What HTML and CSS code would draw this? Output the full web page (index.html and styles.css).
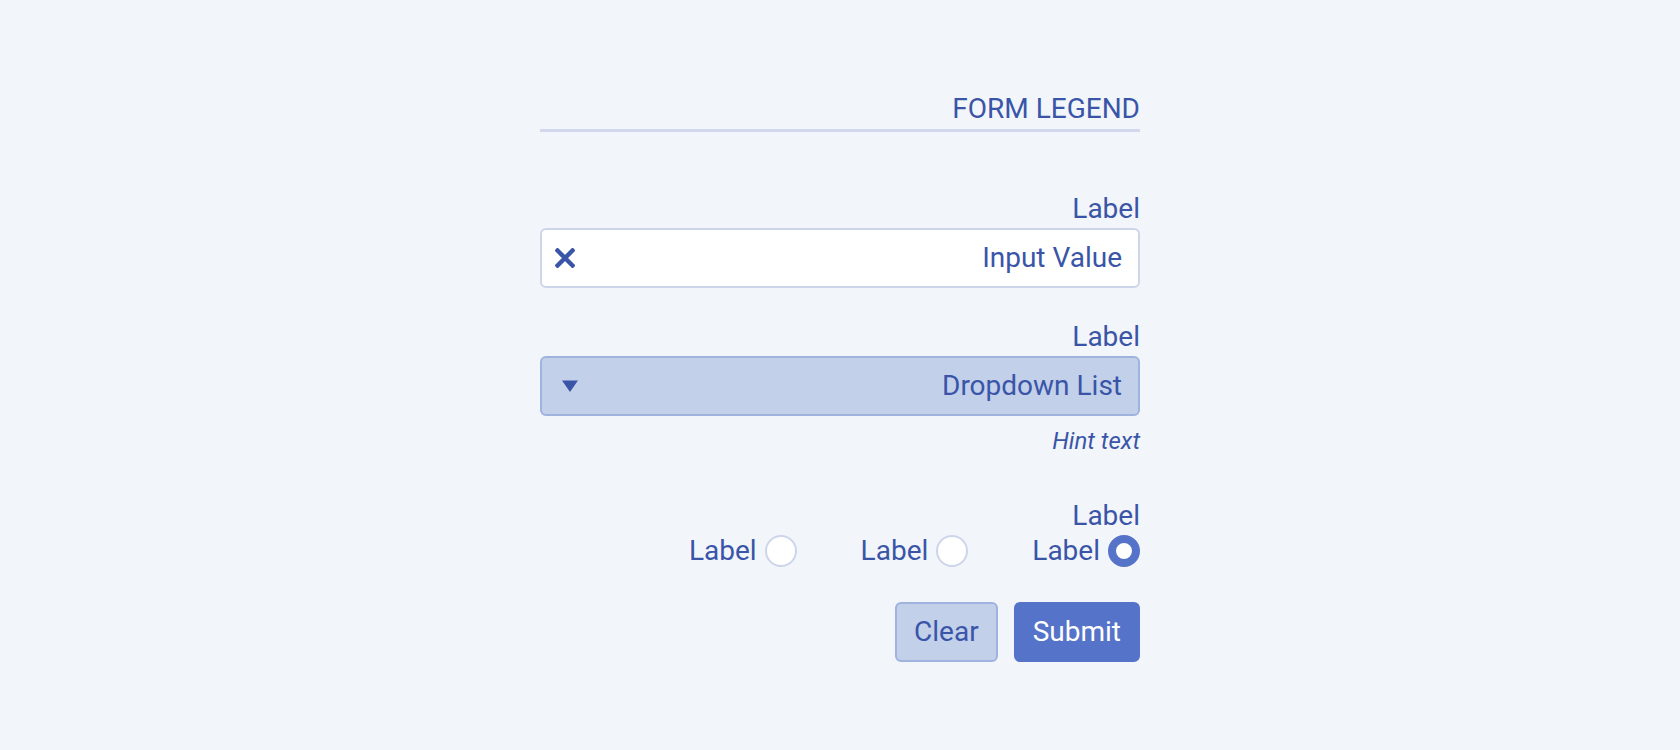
FILE: index.html
```html
<!DOCTYPE html>
<html lang="en">
<head>
<meta charset="utf-8">
<title>Form</title>
<link rel="stylesheet" href="styles.css">
</head>
<body>
<form class="form">
  <div class="legend">FORM LEGEND</div>

  <div class="field field-first">
    <div class="label">Label</div>
    <div class="input">
      <svg class="icon-x" width="20" height="20" viewBox="0 0 20 20"><path d="M2.5 2.5 L17.5 17.5 M17.5 2.5 L2.5 17.5" stroke="currentColor" stroke-width="4.4" stroke-linecap="square" fill="none"/></svg>
      <span class="value">Input Value</span>
    </div>
  </div>

  <div class="field">
    <div class="label">Label</div>
    <div class="input select">
      <svg class="icon-tri" width="16" height="12" viewBox="0 0 16 12"><path d="M0 0.5 L16 0.5 L8 12 Z" fill="currentColor"/></svg>
      <span class="value">Dropdown List</span>
    </div>
    <div class="hint">Hint text</div>
  </div>

  <div class="field field-radio">
    <div class="label">Label</div>
    <div class="radios">
      <div class="radio"><span>Label</span><span class="dot"></span></div>
      <div class="radio"><span>Label</span><span class="dot"></span></div>
      <div class="radio"><span>Label</span><span class="dot checked"></span></div>
    </div>
  </div>

  <div class="buttons">
    <div class="btn btn-clear">Clear</div>
    <div class="btn btn-submit">Submit</div>
  </div>
</form>
</body>
</html>
```

FILE: styles.css
```css
html, body {
  margin: 0;
  padding: 0;
  background: #f2f5fa;
}
body {
  font-family: Roboto, "Liberation Sans", sans-serif;
  font-size: 28px;
  line-height: 1.2;
  color: #3a55a8;
  height: 750px;
}
.form {
  width: 600px;
  margin: 0 auto;
  padding-top: 92px;
  display: flex;
  flex-direction: column;
}
.legend {
  text-align: right;
  padding-bottom: 3px;
  border-bottom: 3px solid #d1d7ec;
}
.field {
  display: flex;
  flex-direction: column;
  margin-top: 32px;
}
.field-first {
  margin-top: 60px;
}
.label {
  text-align: right;
  margin-bottom: 3px;
}
.input {
  display: flex;
  align-items: center;
  justify-content: space-between;
  background: #ffffff;
  border: 2px solid #cdd5ea;
  border-radius: 6px;
  padding: 11px 16px 11px 13px;
}
.select {
  background: #c2d0ea;
  border-color: #9fb3de;
  padding-left: 20px;
}
.icon-x, .icon-tri {
  display: block;
  flex: none;
}
.hint {
  text-align: right;
  font-style: italic;
  font-size: 24px;
  margin-top: 11px;
}
.field-radio {
  margin-top: 43px;
}
.field-radio .label {
  margin-bottom: 2px;
}
.radios {
  display: flex;
  justify-content: flex-end;
  gap: 64px;
}
.radio {
  display: flex;
  align-items: center;
  gap: 8px;
}
.dot {
  width: 28px;
  height: 28px;
  border: 2px solid #ccd5ea;
  border-radius: 50%;
  background: #ffffff;
}
.dot.checked {
  width: 16px;
  height: 16px;
  border: 8px solid #5573c9;
}
.buttons {
  display: flex;
  justify-content: flex-end;
  gap: 16px;
  margin-top: 34px;
}
.btn {
  border: 2px solid #9fb3de;
  border-radius: 6px;
  padding: 11px 17px;
  background: #c2d0ea;
  color: #3a55a8;
}
.btn-submit {
  background: #5573c9;
  border-color: #5573c9;
  color: #ffffff;
}
```
